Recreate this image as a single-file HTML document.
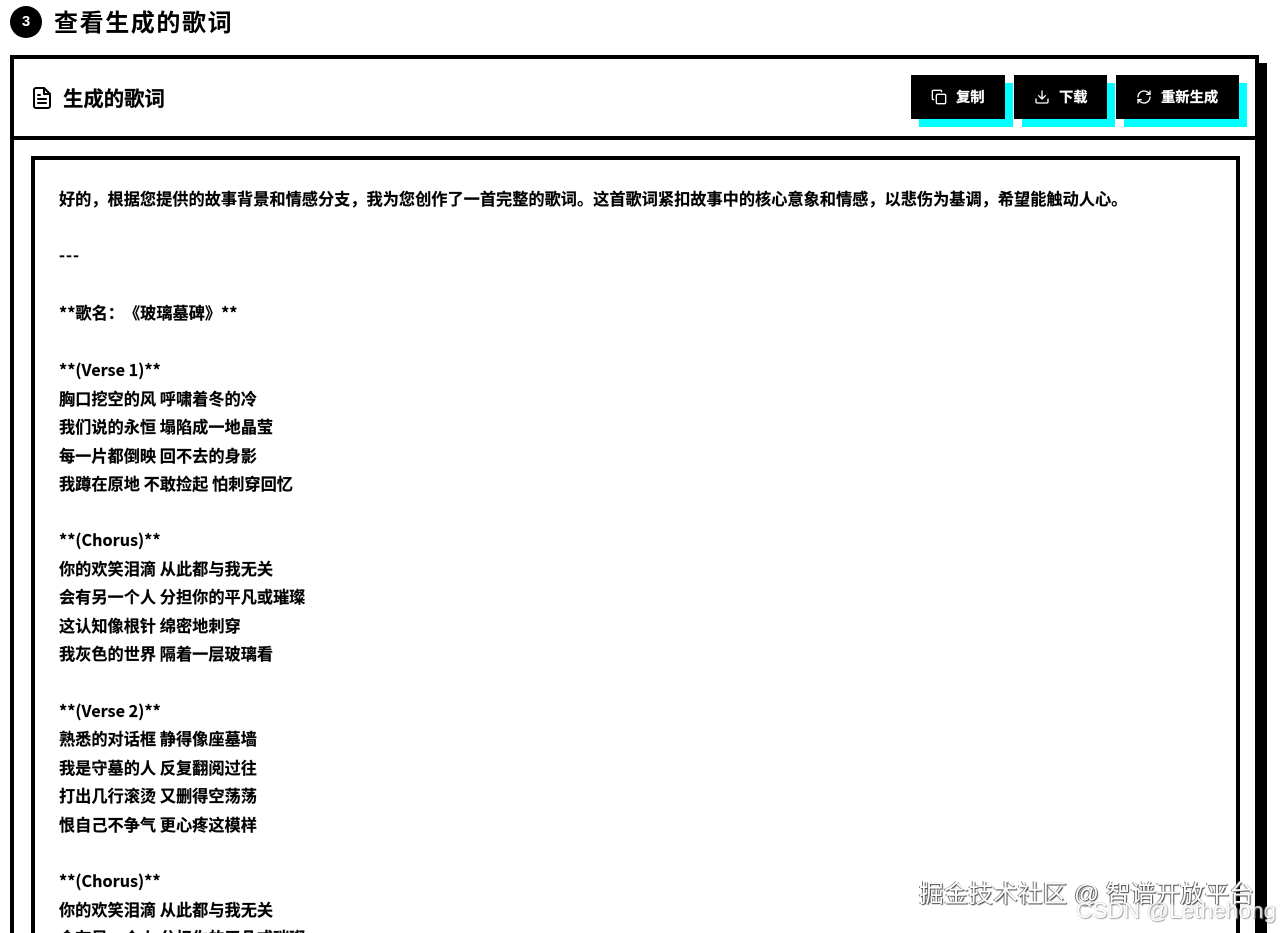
<!DOCTYPE html>
<html lang="zh-CN"><head><meta charset="utf-8">
<style>
html,body{margin:0;padding:0;background:#fff;width:1280px;height:933px;overflow:hidden}
#w{position:relative;width:1280px;height:933px;overflow:hidden;font-family:"Liberation Sans","Noto Sans CJK SC",sans-serif;color:#000;text-spacing-trim:space-all}
.a{position:absolute}
.l{position:absolute;left:59px;font-family:"Noto Sans CJK SC","Liberation Sans",sans-serif;font-size:16.2px;font-weight:700;line-height:28px;height:28px;white-space:nowrap;-webkit-text-stroke:.15px #000}
.b{position:absolute;top:75px;height:44px;background:#000;box-shadow:8px 8px 0 #0ff;color:#fff;font-size:14px;font-weight:700;line-height:46px;white-space:nowrap}
.b svg{position:absolute;top:14px;left:20px}
.b span{position:absolute;top:0;font-size:14.3px;-webkit-text-stroke:.2px #fff}
.wm{position:absolute;white-space:nowrap}
</style></head><body><div id="w">
<div class="a" style="left:10px;top:6px;width:32px;height:32px;border-radius:50%;background:#000;color:#fff;font-size:15px;font-weight:700;line-height:32px;text-align:center">3</div>
<div class="a" style="left:54px;top:6px;font-size:24px;font-weight:700;letter-spacing:1.6px;line-height:36px;white-space:nowrap">查看生成的歌词</div>

<div class="a" style="left:10px;top:55px;width:1241px;height:874px;border:4px solid #000;border-bottom:0;box-shadow:8px 8px 0 #000;background:#fff"></div>
<div class="a" style="left:14px;top:136px;width:1241px;height:4px;background:#000"></div>
<svg class="a" style="left:30px;top:86px" width="24" height="24" viewBox="0 0 24 24" fill="none" stroke="#000" stroke-width="2" stroke-linecap="round" stroke-linejoin="round"><path d="M14 2H6a2 2 0 0 0-2 2v16a2 2 0 0 0 2 2h12a2 2 0 0 0 2-2V8z"/><path d="M14 2v6h6M16 13H8M16 17H8M10 9H8"/></svg>
<div class="a" style="left:63px;top:85px;font-size:20.4px;font-weight:700;line-height:30px;white-space:nowrap;-webkit-text-stroke:.2px #000">生成的歌词</div>

<div class="b" style="left:911px;width:94px"><svg width="16" height="16" viewBox="0 0 24 24" fill="none" stroke="#fff" stroke-width="2" stroke-linecap="round" stroke-linejoin="round"><rect x="8" y="8" width="14" height="14" rx="2"/><path d="M4 16c-1.100 0-2-.9-2-2V4c0-1.100.9-2 2-2h10c1.100 0 2 .9 2 2"/></svg><span style="left:45px">复制</span></div>
<div class="b" style="left:1014px;width:93px"><svg width="16" height="16" viewBox="0 0 24 24" fill="none" stroke="#fff" stroke-width="2" stroke-linecap="round" stroke-linejoin="round"><path d="M21 15v4a2 2 0 0 1-2 2H5a2 2 0 0 1-2-2v-4M7 10l5 5 5-5M12 15V3"/></svg><span style="left:45px">下载</span></div>
<div class="b" style="left:1116px;width:123px"><svg width="16" height="16" viewBox="0 0 24 24" fill="none" stroke="#fff" stroke-width="2" stroke-linecap="round" stroke-linejoin="round"><path d="M3 12a9 9 0 0 1 9-9 9.750 9.750 0 0 1 6.740 2.740L21 8"/><path d="M21 3v5h-5M21 12a9 9 0 0 1-9 9 9.750 9.750 0 0 1-6.740-2.740L3 16"/><path d="M8 16H3v5"/></svg><span style="left:45px">重新生成</span></div>

<div class="a" style="left:31px;top:156px;width:1201px;height:773px;border:4px solid #000;border-bottom:0;background:#fff"></div>

<div class="l" style="top:184px">好的，根据您提供的故事背景和情感分支，我为您创作了一首完整的歌词。这首歌词紧扣故事中的核心意象和情感，以悲伤为基调，希望能触动人心。</div>
<div class="l" style="top:240px;letter-spacing:1px">---</div>
<div class="l" style="top:298px">**歌名：《玻璃墓碑》**</div>
<div class="l" style="top:355px">**(Verse 1)**</div>
<div class="l" style="top:384px">胸口挖空的风 呼啸着冬的冷</div>
<div class="l" style="top:412px">我们说的永恒 塌陷成一地晶莹</div>
<div class="l" style="top:441px">每一片都倒映 回不去的身影</div>
<div class="l" style="top:469px">我蹲在原地 不敢捡起 怕刺穿回忆</div>
<div class="l" style="top:525px">**(Chorus)**</div>
<div class="l" style="top:554px">你的欢笑泪滴 从此都与我无关</div>
<div class="l" style="top:582px">会有另一个人 分担你的平凡或璀璨</div>
<div class="l" style="top:611px">这认知像根针 绵密地刺穿</div>
<div class="l" style="top:639px">我灰色的世界 隔着一层玻璃看</div>
<div class="l" style="top:696px">**(Verse 2)**</div>
<div class="l" style="top:724px">熟悉的对话框 静得像座墓墙</div>
<div class="l" style="top:753px">我是守墓的人 反复翻阅过往</div>
<div class="l" style="top:781px">打出几行滚烫 又删得空荡荡</div>
<div class="l" style="top:810px">恨自己不争气 更心疼这模样</div>
<div class="l" style="top:866px">**(Chorus)**</div>
<div class="l" style="top:895px">你的欢笑泪滴 从此都与我无关</div>
<div class="l" style="top:923px;height:10px;overflow:hidden">会有另一个人 分担你的平凡或璀璨</div>

<div class="wm" style="left:919px;top:880px;font-size:24.7px;line-height:30px;color:#fff;text-shadow:1px 1px 1px #444,-1px 0 0 #777">掘金技术社区 @ 智谱开放平台</div>
<div class="wm" style="left:1076px;top:897px;width:204px;overflow:hidden;font-size:22.6px;line-height:28px;color:#fff;opacity:.85;text-shadow:0 0 1px #777,1px 1px 1px #999">CSDN @Lethehong</div>
</div></body></html>
